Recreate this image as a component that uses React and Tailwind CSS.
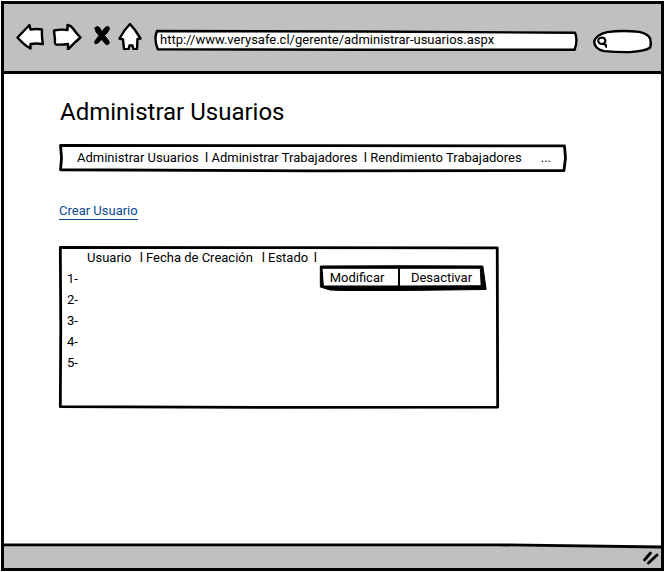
const navLinks = ["Administrar Usuarios", "Administrar Trabajadores", "Rendimiento Trabajadores"];
const rows = [1, 2, 3, 4, 5];

function Icon({ className, box, children }) {
  return (
    <svg className={className} viewBox={box} fill="white" stroke="black" strokeWidth="2.4" strokeLinejoin="round" strokeLinecap="round" aria-hidden="true">
      {children}
    </svg>
  );
}

/* Hand-drawn outline that stretches with the box it decorates. */
function Sketch({ d, fill = "white", width = 2.8 }) {
  return (
    <svg className="pointer-events-none absolute inset-0 h-full w-full overflow-visible" viewBox="0 0 100 100" preserveAspectRatio="none" fill={fill} stroke="black" strokeWidth={width} strokeLinejoin="round" aria-hidden="true">
      <path vectorEffect="non-scaling-stroke" d={d} />
    </svg>
  );
}

function Toolbar() {
  return (
    <header className="flex h-[70px] items-start border-b-[3px] border-black bg-[#c0c0c0] pt-[18px] pr-[9px] pl-3">
      <button type="button" aria-label="Atrás" className="mr-2 h-7 w-7">
        <Icon className="h-7 w-7" box="0 0 28 28">
          <path d="M1.500 15.500 L13.500 3 L14.500 7.500 Q21 6.500 26 7.500 Q25.500 15 27 22 Q20 21 14.500 22 L14.500 26.500 Q8 23 1.500 15.500 Z" />
        </Icon>
      </button>
      <button type="button" aria-label="Adelante" className="mr-3 h-7 w-7.5">
        <Icon className="h-7 w-7.5" box="0 0 30 28">
          <path d="M2 8.500 Q9 7 15.500 8 L15.500 3 Q19 3.500 21 6.500 Q24 11 28.500 15.500 Q23 20 16 27.500 L16 22 Q10 23 4 22.500 Q2.500 22 3 18 Z" />
        </Icon>
      </button>
      <button type="button" aria-label="Detener" className="mr-2 h-7 w-4">
        <Icon className="h-7 w-4" box="0 0 16 28">
          <path fill="black" strokeWidth="1" d="M1 6 Q3 3.500 5.500 5.500 L8 10 Q10 6 12.500 4.500 Q15.500 4 15.500 7 Q13 12 10.500 13.500 Q14 17 15.500 20.500 Q14.500 23.500 12 22.500 L7.500 17.500 Q4 22 1.500 22 Q0 21 1 19 L5 13.500 Q1 10 1 6 Z" />
        </Icon>
      </button>
      <button type="button" aria-label="Inicio" className="mr-3 h-7 w-6">
        <Icon className="h-7 w-6" box="0 0 24 28">
          <path d="M12 2 Q14 4.500 17 8 L22.500 16.500 L19.500 17 L19 27 L15.500 27.300 L14.500 23.500 L11.500 23.500 L10.500 27.300 L6 27 L5 17.500 L1.500 16.500 Q6 8 12 2 Z" />
        </Icon>
      </button>
      <div className="relative mt-2 h-[21px] min-w-0 flex-1">
        <Sketch width={2.4} d="M0.700 5 L50 7 L99.300 13 Q100 50 99.200 94 L50 94 L0.900 92 Q-0.100 45 0.700 5 Z" />
        <input
          aria-label="Dirección"
          defaultValue="http://www.verysafe.cl/gerente/administrar-usuarios.aspx"
          className="relative block h-[21px] w-full bg-transparent px-1.5 pb-0.5 text-[13px] leading-4 outline-none"
        />
      </div>
      <label className="relative mt-2 ml-[15px] flex h-[23px] w-[59px] shrink-0 items-center pl-1">
        <Sketch width={2.4} d="M2 50 Q4 22 24 9 Q50 0 78 8 Q94 17 97 38 Q99 60 97 76 Q90 93 62 96 Q40 97 19 92 Q2 82 2 50 Z" />
        <svg className="relative h-3 w-2.5 shrink-0" viewBox="0 0 10 12" fill="none" stroke="black" strokeWidth="2" strokeLinecap="round" aria-hidden="true">
          <path d="M8.500 5 Q8 1.500 5 1.500 Q1.200 1.800 1.200 5 Q1.800 8 5 8 Q8 7.500 8.500 5 M6.500 8 L9 9 M8 8.500 L9.500 11" />
        </svg>
        <input aria-label="Buscar" className="relative w-9 min-w-0 bg-transparent text-xs outline-none" />
      </label>
    </header>
  );
}

function Actions() {
  return (
    <div className="relative -my-1 flex h-[25px] w-[167px] pb-1 pr-1">
      <Sketch fill="black" width={1} d="M0.200 0 L50 -1 L97.500 0 L99.500 94 L50 98 L14 98 L6 96 L0.200 84 Z" />
      <Sketch width={1} d="M1.200 9 L96 9 L96.500 79 L50 80 L2 80 Z" />
      <button type="button" className="relative w-20 border-r-2 border-black pt-0.5 pr-1 text-[13px] leading-4">Modificar</button>
      <button type="button" className="relative flex-1 pt-0.5 text-[13px] leading-4">Desactivar</button>
    </div>
  );
}

function UserTable() {
  return (
    <section className="relative mt-[26px] min-h-[163px] w-[440px] pt-1 pl-2">
      <Sketch d="M0.300 0.900 L50 1 L99.600 1.200 L99.700 98.800 L50 99 L0.300 98.600 L0.400 50 Z" />
      <table className="relative w-full table-fixed border-collapse text-left text-[13px] leading-4">
        <colgroup>
          <col className="w-5" />
          <col className="w-[59px]" />
          <col className="w-[122px]" />
          <col className="w-[52px]" />
          <col />
        </colgroup>
        <thead>
          <tr className="h-[18px] align-top">
            <td />
            {["Usuario", "Fecha de Creación", "Estado"].map((name) => (
              <th key={name} className="p-0 font-normal">
                <div className="flex justify-between pr-[3px]"><span>{name}</span><span>l</span></div>
              </th>
            ))}
            <td />
          </tr>
        </thead>
        <tbody>
          {rows.map((n) => (
            <tr key={n} className="h-[21px]">
              <td className="p-0">{n}-</td>
              <td />
              <td />
              <td />
              <td className="p-0">{n === 1 && <Actions />}</td>
            </tr>
          ))}
        </tbody>
      </table>
    </section>
  );
}

export default function App() {
  return (
    <div className="flex min-h-screen bg-white p-px font-['Roboto','Liberation_Sans',sans-serif] text-black">
      <div className="flex min-w-0 flex-1 flex-col border-[3px] border-black">
        <Toolbar />
        <main className="flex-1 px-[55px] pt-[22px]">
          <h1 className="pl-px text-2xl leading-8">Administrar Usuarios</h1>
          <nav className="relative mt-4 flex h-7 w-[508px] items-center pr-4 pl-[18px] text-[13px] leading-4">
            <Sketch d="M0.300 5 L50 6 L99.500 7 L99.700 50 L99.400 95 L50 96 L0.300 92 L0.500 50 Z" />
            {navLinks.map((name, i) => (
              <span key={name} className="relative whitespace-pre">
                {i > 0 && "  l "}
                <a href="#">{name}</a>
              </span>
            ))}
            <span className="relative ml-auto">...</span>
          </nav>
          <a href="#" className="mt-[31px] block w-fit border-b border-[#0b4a91] text-[13px] leading-4 text-[#0b4a91]">Crear Usuario</a>
          <UserTable />
        </main>
        <footer className="relative flex h-[25px] items-center justify-end bg-[#c0c0c0] pt-1 pr-0.5">
          <svg className="absolute inset-x-0 top-0 h-1.5 w-full" viewBox="0 0 100 6" preserveAspectRatio="none" aria-hidden="true">
            <path fill="white" d="M0 0 H100 V4 L75 1.500 H0 Z" />
            <path fill="none" stroke="black" strokeWidth="2.8" vectorEffect="non-scaling-stroke" d="M0 1.800 L75 1.800 L100 4" />
          </svg>
          <svg className="h-4 w-4" viewBox="0 0 16 16" fill="none" stroke="black" strokeWidth="2.8" strokeLinecap="round" strokeLinejoin="round" aria-hidden="true">
            <path d="M1.500 10 L7.500 3 M5.500 13 L14 5" />
          </svg>
        </footer>
      </div>
    </div>
  );
}
